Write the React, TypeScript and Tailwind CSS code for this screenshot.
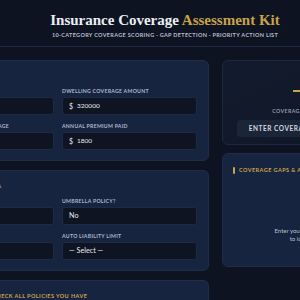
const gold = 'text-[#c9a24a]';

function PanelHeader({ title }: { title: string }) {
  return (
    <div className="mb-[6px] flex h-[10px] items-center gap-[4px]">
      <span className="h-[7px] w-[2px] rounded-[1px] bg-[#c9a24a]" />
      <span className={`whitespace-nowrap text-[5.5px] font-bold uppercase leading-[10px] tracking-[0.08em] ${gold}`}>
        {title}
      </span>
    </div>
  );
}

function Field({ label, children }: { label: string; children: React.ReactNode }) {
  return (
    <div className="flex flex-col">
      <label className="mb-[2px] h-[8px] whitespace-nowrap text-[5.2px] font-bold uppercase leading-[8px] tracking-[0.05em] text-[#aeb8ca]">
        {label}
      </label>
      {children}
    </div>
  );
}

function MoneyInput({ value }: { value: string }) {
  return (
    <div className="flex h-[18px] items-center gap-[4px] rounded-[3px] border border-[#1e2a44] bg-[#0e1422] px-[6px] text-[7px] text-[#e6e9ef]">
      <span>$</span>
      <span className="text-[6.5px]">{value}</span>
    </div>
  );
}

function SelectBox({ value }: { value: string }) {
  return (
    <div className="flex h-[18px] items-center rounded-[3px] border border-[#1e2a44] bg-[#0e1422] px-[6px] text-[7.2px] text-[#e6e9ef]">
      {value}
    </div>
  );
}

export default function App() {
  return (
    <div className="h-[300px] w-[300px] overflow-hidden bg-[#0d1321] font-['Lato','Open_Sans',sans-serif]">
      <div className="ml-[-105px] w-[540px]">
        <header className="flex h-[47px] flex-col items-center border-b border-[#1d2a44] pt-[11px]">
          <h1 className="whitespace-nowrap font-['Liberation_Serif',serif] text-[15px] font-bold leading-[18px] text-[#eceef3]">
            Insurance Coverage <span className={gold}>Assessment Kit</span>
          </h1>
          <p className="mt-[2px] whitespace-nowrap text-[5.5px] font-bold uppercase leading-[8px] tracking-[0.06em] text-[#b7bfce]">
            10-Category Coverage Scoring · Gap Detection · Priority Action List
          </p>
        </header>

        <main className="flex gap-[13px] pl-[12px] pt-[13px]">
          <div className="flex w-[302px] shrink-0 flex-col gap-[9px]">
            <section className="rounded-[6px] border border-[#1f2d4a] bg-[#172440] px-[11px] pb-[10px] pt-[10px]">
              <PanelHeader title="Home" />
              <div className="grid grid-cols-2 gap-x-[8px] gap-y-[7px]">
                <Field label="Home Replacement Cost">
                  <MoneyInput value="" />
                </Field>
                <Field label="Dwelling Coverage Amount">
                  <MoneyInput value="320000" />
                </Field>
                <Field label="Personal Property Coverage">
                  <MoneyInput value="" />
                </Field>
                <Field label="Annual Premium Paid">
                  <MoneyInput value="1800" />
                </Field>
              </div>
            </section>

            <section className="rounded-[6px] border border-[#1f2d4a] bg-[#172440] px-[11px] pb-[10px] pt-[10px]">
              <PanelHeader title="Liability & Excess Data" />
              <div className="grid grid-cols-2 gap-x-[8px] gap-y-[7px]">
                <Field label="Household Net Worth">
                  <SelectBox value="" />
                </Field>
                <Field label="Umbrella Policy?">
                  <SelectBox value="No" />
                </Field>
                <Field label="Number of Vehicles">
                  <SelectBox value="" />
                </Field>
                <Field label="Auto Liability Limit">
                  <SelectBox value="— Select —" />
                </Field>
              </div>
            </section>

            <section className="h-[80px] rounded-[6px] border border-[#1f2d4a] bg-[#172440] px-[11px] pt-[10px]">
              <PanelHeader title="Policy Inventory — Check All Policies You Have" />
            </section>
          </div>

          <div className="flex w-[176px] shrink-0 flex-col gap-[8px]">
            <section className="flex h-[85px] flex-col items-center rounded-[6px] border border-[#1c2740] bg-gradient-to-br from-[#121b2d] to-[#0f1626] pt-[29px]">
              <span className="h-[2px] w-[34px] bg-[#c9a24a]" />
              <span className="mt-[15px] whitespace-nowrap text-[5.2px] font-bold uppercase leading-[8px] tracking-[0.08em] text-[#8f99ab]">
                Coverage Health Score
              </span>
              <button className="mt-[5px] h-[17px] w-[146px] rounded-[3px] bg-[#1a2537] text-[6.5px] font-bold uppercase leading-[17px] tracking-[0.08em] text-[#d3d8e1]">
                Enter Coverage Data to Score
              </button>
            </section>

            <section className="flex h-[114px] flex-col rounded-[6px] border border-[#1f2d4a] bg-[#172440] px-[10px] pt-[11px]">
              <PanelHeader title="Coverage Gaps & Action Items" />
              <p className="mt-[46px] text-center text-[6px] leading-[8px] text-[#b9c0cd]">
                Enter your coverage details
                <br />
                to identify gaps
              </p>
            </section>
          </div>
        </main>
      </div>
    </div>
  );
}
